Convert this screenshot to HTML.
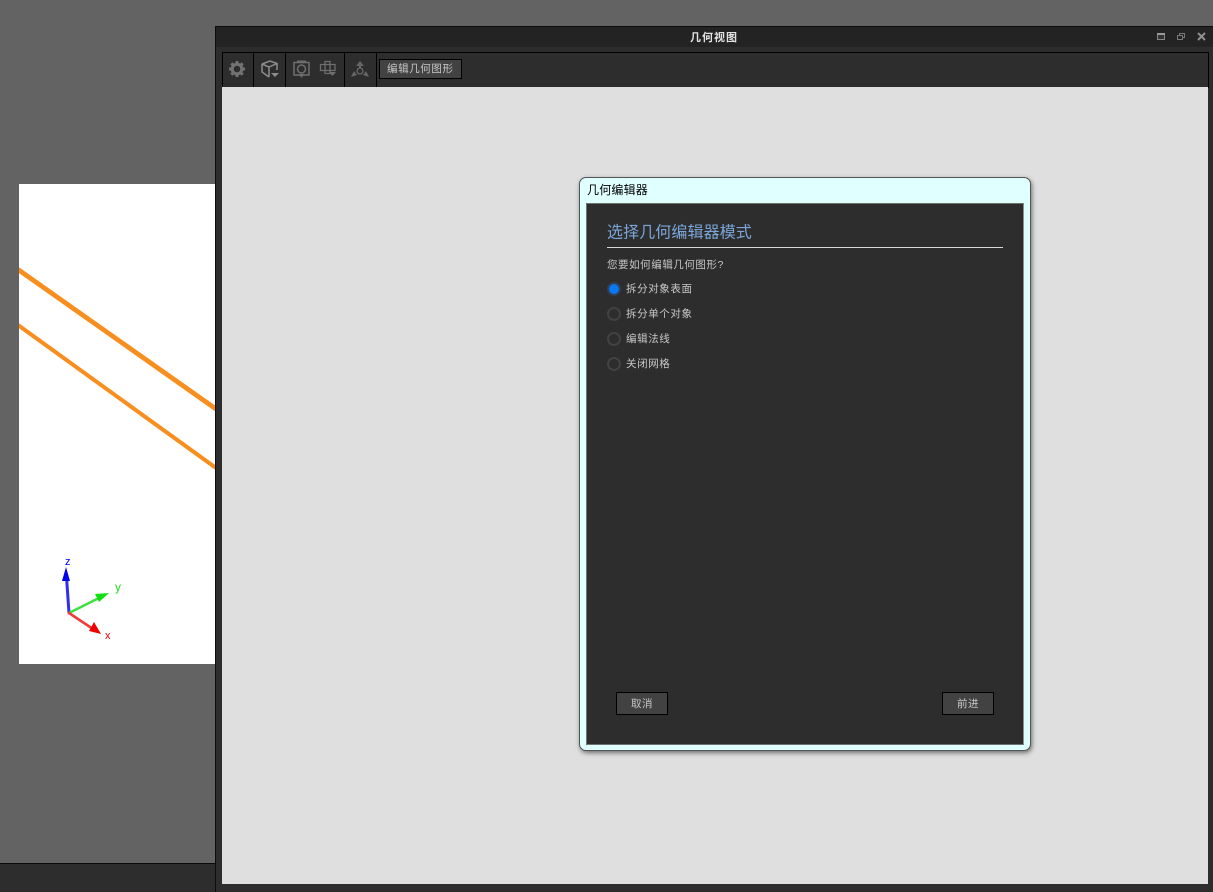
<!DOCTYPE html>
<html lang="zh-CN">
<head>
<meta charset="utf-8">
<title>几何视图</title>
<style>
html,body{margin:0;padding:0;}
body{width:1213px;height:892px;overflow:hidden;position:relative;background:#636363;font-family:"Liberation Sans","Noto Sans CJK SC",sans-serif;}
div,svg,span{position:absolute;box-sizing:border-box;}
.t{white-space:nowrap;line-height:14px;}
.radio{width:14px;height:14px;border-radius:50%;border:2px solid #424242;background:#2d2d2d;left:607px;}
.lbl{left:626px;font-size:10.5px;color:#c8c8c8;letter-spacing:.6px;}
.btn{width:52px;height:23px;top:692px;background:#424242;border:1px solid #000;color:#c8c8c8;font-size:10.5px;text-align:center;line-height:22px;letter-spacing:.5px;}
.sep{width:1px;height:34px;top:53px;background:#000;}
</style>
</head>
<body>
<div style="left:19px;top:184px;width:196px;height:480px;background:#fff;"></div>
<svg style="left:19px;top:184px;" width="196" height="480" viewBox="0 0 196 480">
<line x1="-1" y1="85.500" x2="197" y2="225" stroke="#f78e1e" stroke-width="4.800"/>
<line x1="-1" y1="141" x2="197" y2="284" stroke="#f78e1e" stroke-width="4"/>
<g fill="none" stroke-linecap="round">
<line x1="50" y1="429" x2="47.500" y2="393" stroke="#3030e8" stroke-width="3"/>
<line x1="50" y1="429" x2="82" y2="413" stroke="#40e040" stroke-width="2.600"/>
<line x1="50" y1="429" x2="74" y2="445" stroke="#ee3b3b" stroke-width="2.600"/>
</g>
<polygon points="47,383 51,397 43,397" fill="#0000f0"/>
<polygon points="90,409 80,418 76,410" fill="#10e010"/>
<polygon points="82,450 70,447 75,438" fill="#f00000"/>
<text x="46" y="381" font-size="11" fill="#0000f0" font-family="Liberation Sans">z</text>
<text x="96" y="407" font-size="12" fill="#20e020" font-family="Liberation Sans">y</text>
<text x="86" y="455" font-size="11" fill="#f00000" font-family="Liberation Sans">x</text>
</svg>
<div style="left:0;top:863px;width:215px;height:29px;background:#2d2d2d;border-top:1px solid #0a0a0a;"></div>

<!-- window -->
<div style="left:215px;top:26px;width:998px;height:866px;background:#2d2d2d;border-left:1px solid #0c0c0c;border-top:1px solid #0c0c0c;"></div>
<div style="left:216px;top:27px;width:997px;height:20px;background:#232323;"></div>
<div class="t" style="left:690px;top:31px;font-size:11px;font-weight:bold;color:#e2e2e2;letter-spacing:1px;">几何视图</div>
<svg style="left:1155px;top:30px;" width="54" height="14" viewBox="0 0 54 14">
<rect x="2.500" y="3.500" width="7" height="6" fill="#333" stroke="#858585"/><line x1="2" y1="4" x2="10" y2="4" stroke="#999" stroke-width="2"/>
<rect x="22.500" y="5.500" width="5" height="4" fill="none" stroke="#777"/><path d="M24.500 5.500V3.500H29.500V7.500H27.500" fill="none" stroke="#777"/>
<path d="M43 3L50 10M50 3L43 10" stroke="#8f8f8f" stroke-width="2"/>
</svg>

<!-- toolbar -->
<div style="left:222px;top:52px;width:987px;height:36px;background:#2d2d2d;border:1px solid #000;"></div>
<div class="sep" style="left:253px;"></div>
<div class="sep" style="left:285px;"></div>
<div class="sep" style="left:344px;"></div>
<div class="sep" style="left:376px;"></div>
<svg style="left:223px;top:53px;" width="155" height="34" viewBox="0 0 155 34">
<!-- gear -->
<g transform="translate(14,16)" fill="none" stroke="#737373">
<circle r="4.800" stroke-width="3"/>
<path d="M0-8V-5.500M0 8V5.500M-8 0H-5.500M8 0H5.500M-5.700-5.700L-4-4M5.700-5.700L4-4M-5.700 5.700L-4 4M5.700 5.700L4 4" stroke-width="3"/>
</g>
<!-- cube -->
<g fill="none" stroke="#8c8c8c" stroke-width="1.500">
<path d="M39 11L47 8L54 10.500V17M39 11V19L46 24M39 11L46 14V24M46 14L54 10.500"/>
</g>
<polygon points="48,20 56,20 52,24" fill="#8c8c8c"/>
<!-- camera -->
<g fill="none" stroke="#6e6e6e" stroke-width="1.500">
<path d="M71 9.500H86V22H71Z"/><circle cx="78.500" cy="16" r="4"/>
</g>
<path d="M74 7.500H83V9H74Z" fill="#6e6e6e"/><polygon points="76,21 81,21 78.500,25" fill="#6e6e6e"/>
<!-- grid -->
<g fill="none" stroke="#6e6e6e" stroke-width="1.300">
<path d="M97.500 11.500H112V17.500H97.500ZM102 8.500H107V20.500H102Z"/>
</g>
<polygon points="106,19 113,19 109.500,23" fill="#6e6e6e"/>
<!-- axes -->
<g fill="#666">
<polygon points="137,8 141,13 133,13"/><rect x="136" y="13" width="2" height="6"/>
<polygon points="128,24 131,18 134,22"/><polygon points="146,24 143,18 140,22"/>
</g>
<circle cx="137" cy="18" r="3" fill="#2d2d2d" stroke="#777"/>
</svg>
<div style="left:379px;top:59px;width:83px;height:20px;background:#424242;border:1px solid #000;"></div>
<div class="t" style="left:387px;top:62px;font-size:10.500px;color:#c8c8c8;letter-spacing:.6px;">编辑几何图形</div>

<!-- viewport -->
<div style="left:222px;top:87px;width:986px;height:797px;background:#dfdfdf;"></div>

<!-- dialog -->
<div style="left:579px;top:177px;width:452px;height:574px;background:#e0ffff;border:1px solid #555;border-radius:7px;box-shadow:1px 2px 5px rgba(0,0,0,.5);"></div>
<div class="t" style="left:587px;top:183px;font-size:12px;color:#000;letter-spacing:.2px;">几何编辑器</div>
<div style="left:586px;top:203px;width:438px;height:542px;background:#2d2d2d;border:1px solid #6d7272;border-right-color:#8a9090;"></div>
<div class="t" style="left:607px;top:223px;font-size:16px;line-height:18px;color:#7ba5d8;letter-spacing:.1px;padding-top:0;transform:translateY(1.500px);">选择几何编辑器模式</div>
<div style="left:607px;top:247px;width:396px;height:1px;background:#d8d8d8;"></div>
<div class="t" style="left:607px;top:258px;font-size:10.500px;color:#c8c8c8;letter-spacing:.55px;">您要如何编辑几何图形?</div>

<div class="radio" style="top:282px;background:#0a78f0;border-color:#2f3f55;"></div>
<div class="t lbl" style="top:282px;">拆分对象表面</div>
<div class="radio" style="top:307px;"></div>
<div class="t lbl" style="top:307px;">拆分单个对象</div>
<div class="radio" style="top:332px;"></div>
<div class="t lbl" style="top:332px;">编辑法线</div>
<div class="radio" style="top:357px;"></div>
<div class="t lbl" style="top:357px;">关闭网格</div>

<div class="btn" style="left:616px;">取消</div>
<div class="btn" style="left:942px;">前进</div>
</body>
</html>
